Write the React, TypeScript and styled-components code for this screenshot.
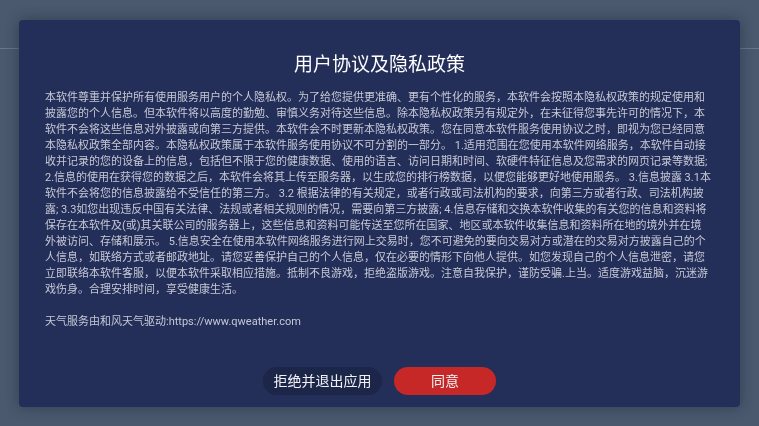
import React from "react";
import styled, { createGlobalStyle } from "styled-components";

const GlobalStyle = createGlobalStyle`
  html, body {
    margin: 0;
    padding: 0;
    background: #4a596e;
  }
  * { box-sizing: border-box; }
`;

const Page = styled.div`
  width: 100vw;
  height: 100vh;
  background: #4a596e;
  font-family: Roboto, "Noto Sans CJK SC", sans-serif;
`;

const AppHeader = styled.div`
  height: 49px;
  border-bottom: 1px solid #66768b;
`;

const Overlay = styled.div`
  position: fixed;
  inset: 0;
  display: flex;
  align-items: center;
  justify-content: center;
`;

const Dialog = styled.div`
  width: 721px;
  display: flex;
  flex-direction: column;
  align-items: center;
  padding: 32px 26px 12px;
  background: #232e59;
  border-radius: 4px;
  box-shadow: 0 0 14px rgba(20, 28, 45, 0.45);
`;

const Title = styled.h1`
  margin: 0;
  font-size: 19px;
  line-height: 26px;
  font-weight: 400;
  color: #ffffff;
  font-family: Roboto, "Noto Sans CJK SC", sans-serif;
`;

const Body = styled.div`
  align-self: stretch;
  margin-top: 12px;
  font-size: 11px;
  line-height: 16px;
  color: #c6c9d5;
  font-family: Roboto, "Noto Sans CJK SC", sans-serif;
`;

const Line = styled.div`
  white-space: nowrap;
`;

const Note = styled.p`
  margin: 16px 0 0;
`;

const Actions = styled.div`
  margin-top: 37px;
  display: flex;
  gap: 12px;
`;

const Button = styled.button<{ $primary?: boolean }>`
  height: 28px;
  padding: 0 ${(p) => (p.$primary ? "37px" : "10.5px")};
  border: none;
  border-radius: 14px;
  background: ${(p) => (p.$primary ? "#c62828" : "#1c2649")};
  color: #f2f2f6;
  font-size: 14px;
  font-family: Roboto, "Noto Sans CJK SC", sans-serif;
  line-height: 28px;
  cursor: pointer;
`;

const lines = [
  "本软件尊重并保护所有使用服务用户的个人隐私权。为了给您提供更准确、更有个性化的服务，本软件会按照本隐私权政策的规定使用和",
  "披露您的个人信息。但本软件将以高度的勤勉、审慎义务对待这些信息。除本隐私权政策另有规定外，在未征得您事先许可的情况下，本",
  "软件不会将这些信息对外披露或向第三方提供。本软件会不时更新本隐私权政策。您在同意本软件服务使用协议之时，即视为您已经同意",
  "本隐私权政策全部内容。本隐私权政策属于本软件服务使用协议不可分割的一部分。 1.适用范围在您使用本软件网络服务，本软件自动接",
  "收并记录的您的设备上的信息，包括但不限于您的健康数据、使用的语言、访问日期和时间、软硬件特征信息及您需求的网页记录等数据;",
  "2.信息的使用在获得您的数据之后，本软件会将其上传至服务器，以生成您的排行榜数据，以便您能够更好地使用服务。 3.信息披露 3.1本",
  "软件不会将您的信息披露给不受信任的第三方。 3.2 根据法律的有关规定，或者行政或司法机构的要求，向第三方或者行政、司法机构披",
  "露; 3.3如您出现违反中国有关法律、法规或者相关规则的情况，需要向第三方披露; 4.信息存储和交换本软件收集的有关您的信息和资料将",
  "保存在本软件及(或)其关联公司的服务器上，这些信息和资料可能传送至您所在国家、地区或本软件收集信息和资料所在地的境外并在境",
  "外被访问、存储和展示。 5.信息安全在使用本软件网络服务进行网上交易时，您不可避免的要向交易对方或潜在的交易对方披露自己的个",
  "人信息，如联络方式或者邮政地址。请您妥善保护自己的个人信息，仅在必要的情形下向他人提供。如您发现自己的个人信息泄密，请您",
  "立即联络本软件客服，以便本软件采取相应措施。抵制不良游戏，拒绝盗版游戏。注意自我保护，谨防受骗.上当。适度游戏益脑，沉迷游",
  "戏伤身。合理安排时间，享受健康生活。",
];

export default function App() {
  return (
    <>
      <GlobalStyle />
      <Page>
        <AppHeader />
        <Overlay>
          <Dialog>
            <Title>用户协议及隐私政策</Title>
            <Body>
              {lines.map((l, i) => (
                <Line key={i}>{l}</Line>
              ))}
              <Note>天气服务由和风天气驱动:https://www.qweather.com</Note>
            </Body>
            <Actions>
              <Button>拒绝并退出应用</Button>
              <Button $primary>同意</Button>
            </Actions>
          </Dialog>
        </Overlay>
      </Page>
    </>
  );
}
